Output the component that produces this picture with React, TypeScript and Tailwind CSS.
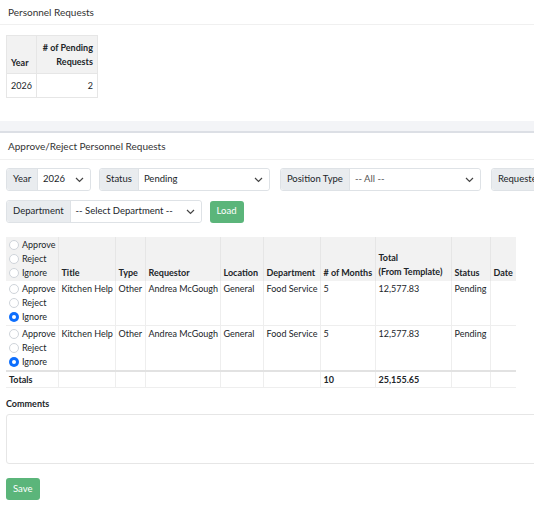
import React from 'react';

const FONT = { fontFamily: 'Lato, "Noto Sans", sans-serif' };

function Radio({ checked, label }: { checked?: boolean; label: string }) {
    return (
        <div className="flex items-center gap-[3px] h-[14px] whitespace-nowrap">
            {checked ? (
                <span className="w-[10px] h-[10px] rounded-full bg-[#0d6efd] flex items-center justify-center shrink-0">
                    <span className="w-[4px] h-[4px] rounded-full bg-white" />
                </span>
            ) : (
                <span className="w-[10px] h-[10px] rounded-full border border-[#cfd4da] bg-white shrink-0" />
            )}
            <span>{label}</span>
        </div>
    );
}

function Chevron() {
    return (
        <svg width="9" height="6" viewBox="0 0 9 6" className="shrink-0">
            <path d="M1 1l3.5 3.5L8 1" fill="none" stroke="#444" strokeWidth="1.2" />
        </svg>
    );
}

function Group({ label, value, selW, muted }: { label: string; value: string; selW: number; muted?: boolean }) {
    return (
        <div className="flex h-[23px] border border-[#dee2e6] rounded-[3px] shrink-0 text-[9.5px] text-[#212529]">
            <div className="bg-[#e9ecef] px-[6px] flex items-center border-r border-[#dee2e6] whitespace-nowrap rounded-l-[3px]">{label}</div>
            <div className="flex items-center justify-between pl-[5px] pr-[6px] bg-white rounded-r-[3px] whitespace-nowrap" style={{ width: selW }}>
                <span className={muted ? 'text-[#555]' : ''}>{value}</span>
                <Chevron />
            </div>
        </div>
    );
}

const cols = [52, 57, 30, 75, 43, 57, 55, 76, 39, 26];

function RequestRow() {
    return (
        <tr className="align-top h-[44px] border-b border-[#eee]">
            <td className="px-[3px] py-[1px] border-r border-[#eee]">
                <Radio label="Approve" />
                <Radio label="Reject" />
                <Radio checked label="Ignore" />
            </td>
            <td className="px-[3px] pt-[1px] leading-[14px] border-r border-[#eee]">Kitchen Help</td>
            <td className="px-[3px] pt-[1px] leading-[14px] border-r border-[#eee]">Other</td>
            <td className="px-[3px] pt-[1px] leading-[14px] border-r border-[#eee]">Andrea McGough</td>
            <td className="px-[3px] pt-[1px] leading-[14px] border-r border-[#eee]">General</td>
            <td className="px-[3px] pt-[1px] leading-[14px] border-r border-[#eee]">Food Service</td>
            <td className="px-[3px] pt-[1px] leading-[14px] border-r border-[#eee]">5</td>
            <td className="px-[3px] pt-[1px] leading-[14px] border-r border-[#eee]">12,577.83</td>
            <td className="px-[3px] pt-[1px] leading-[14px] border-r border-[#eee]">Pending</td>
            <td className="px-[3px] pt-[1px]"></td>
        </tr>
    );
}

export default function App() {
    return (
        <div className="w-[534px] h-[507px] overflow-hidden bg-white text-[#212529]" style={FONT}>
            {/* Summary card */}
            <div className="bg-white">
                <div className="h-[25px] px-[8px] flex items-center text-[10px] text-[#333] border-b border-[#f0f0f0]">
                    Personnel Requests
                </div>
                <div className="px-[6px] pt-[10px] pb-[23px]">
                    <table className="border-collapse text-[9px] whitespace-nowrap">
                        <thead>
                            <tr className="bg-[#f2f2f2] h-[38px]">
                                <th className="w-[29px] px-[4px] pb-[4px] align-bottom text-left font-bold border border-[#e6e6e6]">Year</th>
                                <th className="w-[61px] px-[4px] pb-[4px] align-bottom text-right font-bold leading-[14px] border border-[#e6e6e6]">
                                    # of Pending
                                    <br />
                                    Requests
                                </th>
                            </tr>
                        </thead>
                        <tbody>
                            <tr className="h-[24px]">
                                <td className="px-[4px] border border-[#e6e6e6]">2026</td>
                                <td className="px-[4px] text-right border border-[#e6e6e6]">2</td>
                            </tr>
                        </tbody>
                    </table>
                </div>
            </div>

            <div className="h-[10px] bg-[#f3f4f7]" />

            {/* Approve/Reject card */}
            <div className="border-t-2 border-[#dcdfe5]">
                <div className="h-[27px] px-[8px] flex items-center text-[10px] text-[#333] border-b border-[#f0f0f0]">
                    Approve/Reject Personnel Requests
                </div>

                <div className="px-[6px] pt-[8px]">
                    <div className="flex">
                        <Group label="Year" value="2026" selW={52} />
                        <div className="w-[8px] shrink-0" />
                        <Group label="Status" value="Pending" selW={130} />
                        <div className="w-[10px] shrink-0" />
                        <Group label="Position Type" value="-- All --" selW={130} muted />
                        <div className="w-[10px] shrink-0" />
                        <Group label="Requested By" value="" selW={100} />
                    </div>

                    <div className="flex gap-[8px] mt-[9px] items-center">
                        <Group label="Department" value="-- Select Department --" selW={130} />
                        <button className="h-[22px] px-[7px] rounded-[3px] bg-[#5bb57a] text-white text-[9.5px]">Load</button>
                    </div>

                    <table className="mt-[14px] border-collapse text-[9px] table-fixed whitespace-nowrap" style={{ width: cols.reduce((a, b) => a + b, 0) }}>
                        <colgroup>
                            {cols.map((w, i) => (
                                <col key={i} style={{ width: w }} />
                            ))}
                        </colgroup>
                        <thead>
                            <tr className="bg-[#f2f2f2] h-[44px] align-bottom">
                                <th className="px-[3px] py-[1px] text-left font-normal border-r border-[#e6e6e6]">
                                    <Radio label="Approve" />
                                    <Radio label="Reject" />
                                    <Radio label="Ignore" />
                                </th>
                                <th className="px-[3px] pb-[2px] text-left font-bold border-r border-[#e6e6e6]">Title</th>
                                <th className="px-[3px] pb-[2px] text-left font-bold border-r border-[#e6e6e6]">Type</th>
                                <th className="px-[3px] pb-[2px] text-left font-bold border-r border-[#e6e6e6]">Requestor</th>
                                <th className="px-[3px] pb-[2px] text-left font-bold border-r border-[#e6e6e6]">Location</th>
                                <th className="px-[3px] pb-[2px] text-left font-bold border-r border-[#e6e6e6]">Department</th>
                                <th className="px-[3px] pb-[2px] text-left font-bold border-r border-[#e6e6e6]"># of Months</th>
                                <th className="px-[3px] pb-[2px] text-left font-bold leading-[14px] border-r border-[#e6e6e6]">
                                    Total
                                    <br />
                                    (From Template)
                                </th>
                                <th className="px-[3px] pb-[2px] text-left font-bold border-r border-[#e6e6e6]">Status</th>
                                <th className="px-[3px] pb-[2px] text-left font-bold">Date</th>
                            </tr>
                        </thead>
                        <tbody>
                            <RequestRow />
                            <RequestRow />
                            <tr className="h-[16px] border-t-2 border-[#e2e2e2] border-b border-b-[#eee] font-bold">
                                <td className="px-[3px] border-r border-[#eee]">Totals</td>
                                <td className="border-r border-[#eee]"></td>
                                <td className="border-r border-[#eee]"></td>
                                <td className="border-r border-[#eee]"></td>
                                <td className="border-r border-[#eee]"></td>
                                <td className="border-r border-[#eee]"></td>
                                <td className="px-[3px] border-r border-[#eee]">10</td>
                                <td className="px-[3px] border-r border-[#eee]">25,155.65</td>
                                <td className="border-r border-[#eee]"></td>
                                <td></td>
                            </tr>
                        </tbody>
                    </table>

                    <div className="mt-[9px] text-[9px] font-bold">Comments</div>
                    <div className="mt-[4px] h-[50px] w-[560px] border border-[#e6e6e6] rounded-[3px]" />

                    <button className="mt-[14px] h-[22px] px-[7px] rounded-[3px] bg-[#5bb57a] text-white text-[9.5px]">Save</button>
                </div>
            </div>
        </div>
    );
}
